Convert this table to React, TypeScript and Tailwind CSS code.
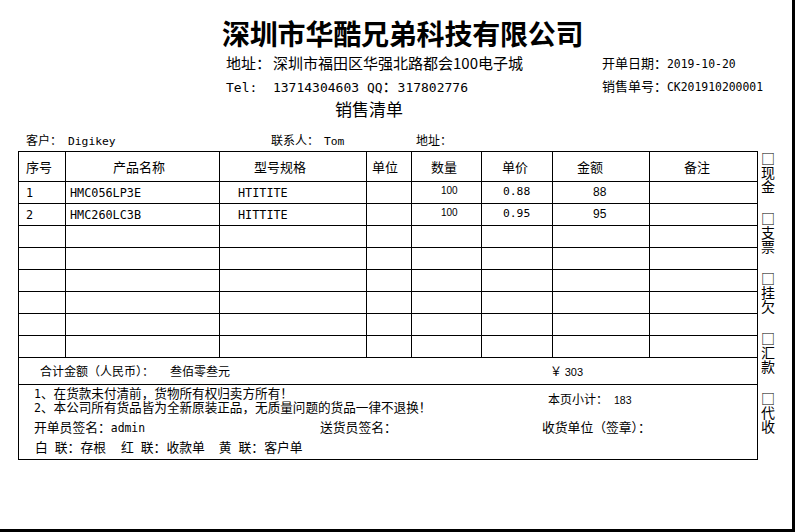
import React from "react";

const mono = "font-['DejaVu_Sans_Mono',monospace]";
const sans = "font-['Liberation_Sans',sans-serif]";

const headers: { t: string; c: string }[] = [
  { t: "序号", c: "pl-[7px]" },
  { t: "产品名称", c: "pl-[47px]" },
  { t: "型号规格", c: "pl-[34px]" },
  { t: "单位", c: "pl-[5px]" },
  { t: "数量", c: "pl-[19px]" },
  { t: "单价", c: "pl-[20px]" },
  { t: "金额", c: "pl-[24px]" },
  { t: "备注", c: "pl-[34px]" },
];

const rows: string[][] = [
  ["1", "HMC056LP3E", "HTITITE", "", "100", "0.88", "88", ""],
  ["2", "HMC260LC3B", "HITTITE", "", "100", "0.95", "95", ""],
  ["", "", "", "", "", "", "", ""],
  ["", "", "", "", "", "", "", ""],
  ["", "", "", "", "", "", "", ""],
  ["", "", "", "", "", "", "", ""],
  ["", "", "", "", "", "", "", ""],
  ["", "", "", "", "", "", "", ""],
];

const cellCls = [
  `pl-[7px] ${mono} text-[11.8px]`,
  `pl-[4px] ${mono} text-[11.8px]`,
  `pl-[18px] ${mono} text-[11.8px]`,
  `pl-[4px] ${mono} text-[11.8px]`,
  `pl-[29px] ${sans} text-[10px] -mt-[3px]`,
  `pl-[21px] ${mono} text-[11.3px] -mt-[2px]`,
  `pl-[40px] ${sans} text-[12px] -mt-[2px]`,
  `pl-[4px] ${mono} text-[11.8px]`,
];

const payments = ["□现金", "□支票", "□挂欠", "□汇款", "□代收"];

export default function App() {
  return (
    <div className="w-[796px] h-[532px] bg-white text-black font-['Noto_Sans_CJK_SC',sans-serif]">
      <div className="w-[795px] h-[532px] border-r-[3px] border-b-[3px] border-black overflow-hidden">
        {/* Title */}
        <div className="pt-[19px] pl-[222px] h-[47px] text-[28px] leading-[28px] font-semibold tracking-[-0.2px]">
          深圳市华酷兄弟科技有限公司
        </div>
        {/* Address / date */}
        <div className="flex items-center h-[16px] mt-[8px]">
          <div className="ml-[226px] w-[376px] h-[16px] text-[15px] leading-[16px] whitespace-nowrap">
            地址：<span className="ml-[2px]">深圳市福田区华强北路都会100电子城</span>
          </div>
          <div className="h-[16px] text-[13px] leading-[16px] whitespace-nowrap">
            开单日期：<span className={`${mono} text-[11.4px]`}>2019-10-20</span>
          </div>
        </div>
        {/* Tel / number */}
        <div className="flex items-center h-[16px] mt-[7px]">
          <div className={`ml-[226px] w-[376px] h-[16px] text-[13px] leading-[16px] whitespace-pre ${mono}`}>
            Tel:  13714304603 QQ<span className="font-['Noto_Sans_CJK_SC',sans-serif] text-[15px]">：</span>317802776
          </div>
          <div className="h-[16px] text-[13px] leading-[16px] whitespace-nowrap">
            销售单号：<span className={`${mono} text-[11.4px]`}>CK201910200001</span>
          </div>
        </div>
        {/* Subtitle */}
        <div className="mt-[6px] pl-[335px] h-[18px] text-[17px] leading-[18px]">销售清单</div>
        {/* Customer row */}
        <div className="flex items-center h-[14px] mt-[15px] text-[12px] leading-[14px] whitespace-pre">
          <div className="ml-[26px] w-[245px] h-[14px]">
            客户：<span className={`${mono} text-[11.3px] ml-[6px]`}>Digikey</span>
          </div>
          <div className="w-[145px] h-[14px]">
            联系人：<span className={`${mono} text-[11.3px] ml-[5px]`}>Tom</span>
          </div>
          <div className="h-[14px]">地址：</div>
        </div>
        {/* Table + payment column */}
        <div className="flex mt-[4px]">
          <div className="ml-[18px] w-[740px] border-l border-t border-black">
            <div className="grid grid-cols-[47px_154px_147px_45px_70px_71px_97px_108px]">
              {headers.map((h, i) => (
                <div
                  key={`h${i}`}
                  className={`h-[30px] border-r border-b border-black flex items-center text-[13px] leading-[14px] ${h.c}`}
                >
                  {h.t}
                </div>
              ))}
              {rows.map((r, ri) =>
                r.map((v, ci) => (
                  <div
                    key={`r${ri}c${ci}`}
                    className="h-[22px] border-r border-b border-black flex items-center"
                  >
                    <span className={`leading-[14px] whitespace-pre ${cellCls[ci]}`}>{v}</span>
                  </div>
                ))
              )}
            </div>
            {/* Total row */}
            <div className="h-[27px] border-r border-b border-black flex items-center text-[12px] leading-[14px]">
              <div className="ml-[21px] w-[130px] h-[14px] whitespace-nowrap">合计金额（人民币）：</div>
              <div className="w-[380px] h-[14px] whitespace-nowrap">叁佰零叁元</div>
              <div className="h-[14px] whitespace-pre">
                ￥ <span className={`${sans} text-[11px]`}>303</span>
              </div>
            </div>
            {/* Bottom section */}
            <div className="h-[75px] border-r border-b border-black text-[12.6px]">
              <div className="flex pt-[1px] h-[29px]">
                <div className="ml-[15px] w-[514px] whitespace-nowrap">
                  <div className="h-[14px] leading-[14px]">
                    <span className={`${mono} text-[11.5px]`}>1</span>、在货款未付清前，货物所有权归卖方所有！
                  </div>
                  <div className="h-[14px] leading-[14px]">
                    <span className={`${mono} text-[11.5px]`}>2</span>、本公司所有货品皆为全新原装正品，无质量问题的货品一律不退换！
                  </div>
                </div>
                <div className="pt-[6px] leading-[14px] text-[12px] whitespace-pre">
                  <div className="h-[14px]">
                    本页小计：<span className={`${sans} text-[10.5px] ml-[6px]`}>183</span>
                  </div>
                </div>
              </div>
              <div className="flex mt-[6px] h-[14px] leading-[14px] text-[12.8px] whitespace-nowrap">
                <div className="ml-[15px] w-[286px] h-[14px]">
                  开单员签名：<span className={`${mono} text-[11.4px]`}>admin</span>
                </div>
                <div className="w-[222px] h-[14px]">送货员签名：</div>
                <div className="h-[14px]">收货单位（签章）：</div>
              </div>
              <div className="flex mt-[6px] h-[14px] leading-[14px] text-[12.8px] whitespace-nowrap">
                <div className="ml-[16px] flex">
                  <span>白</span>
                  <span className="ml-[7px]">联：存根</span>
                  <span className="ml-[15px]">红</span>
                  <span className="ml-[7px]">联：收款单</span>
                  <span className="ml-[14px]">黄</span>
                  <span className="ml-[7px]">联：客户单</span>
                </div>
              </div>
            </div>
          </div>
          <div className="ml-[3px] pt-[1px] flex flex-col gap-[18px]">
            {payments.map((g, gi) => (
              <div
                key={gi}
                className="[writing-mode:vertical-rl] [text-orientation:upright] w-[14px] h-[42px] text-[14px] leading-[14px]"
              >
                {g}
              </div>
            ))}
          </div>
        </div>
      </div>
    </div>
  );
}
